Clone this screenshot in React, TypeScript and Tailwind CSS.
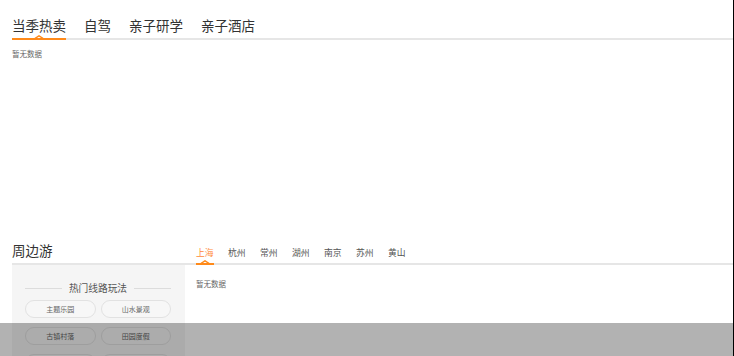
import React from 'react';

const font = { fontFamily: '"Noto Sans CJK SC", "Noto Sans", sans-serif' };

const topTabs = ['当季热卖', '自驾', '亲子研学', '亲子酒店'];
const cities = ['上海', '杭州', '常州', '湖州', '南京', '苏州', '黄山'];
const pills = ['主题乐园', '山水景观', '古镇村落', '田园度假', '', ''];

const Notch = () => (
  <div className="absolute left-0 right-0 -bottom-[2px] h-[2px] bg-[#ff8a1a]">
    <svg
      width="10"
      height="4"
      viewBox="0 0 10 4"
      className="absolute left-1/2 -translate-x-1/2 -top-[3px]"
    >
      <path d="M0 4 L5 0.8 L10 4" fill="none" stroke="#ff8a1a" strokeWidth="1.4" />
    </svg>
  </div>
);

export default function App() {
  return (
    <div className="relative w-[733px] bg-white pl-3 text-[#333]" style={font}>
      {/* 当季热卖 section */}
      <div className="h-[238px] pt-[13px]">
        <div className="flex gap-[18px] border-b-2 border-[#e6e6e6]">
          {topTabs.map((t, i) => (
            <div key={t} className="relative h-[25px] text-[13.5px] leading-[25px] text-[#333]">
              {t}
              {i === 0 && <Notch />}
            </div>
          ))}
        </div>
        <div className="mt-[9px] text-[7.5px] leading-[10px] text-[#666]">暂无数据</div>
      </div>

      {/* 周边游 section */}
      <div className="flex items-end border-b-2 border-[#e6e6e6]">
        <div className="w-[173px] h-[25px] text-[13.5px] leading-[25px] text-[#333]">周边游</div>
        <div className="ml-[11px] flex gap-[14px]">
          {cities.map((c, i) => (
            <div
              key={c}
              className={`relative h-[20px] w-[18px] text-[8.8px] leading-[20px] ${
                i === 0 ? 'text-[#ff8a3a]' : 'text-[#555]'
              }`}
            >
              {c}
              {i === 0 && <Notch />}
            </div>
          ))}
        </div>
      </div>

      <div className="flex">
        <div className="w-[173px] bg-[#f5f5f5] pl-[13px] pr-[14px] pt-[16px] pb-[14px]">
          <div className="flex items-center gap-[7px]">
            <div className="h-px flex-1 bg-[#dcdcdc]" />
            <div className="text-[9.7px] leading-[14px] text-[#555]">热门线路玩法</div>
            <div className="h-px flex-1 bg-[#dcdcdc]" />
          </div>
          <div className="mt-[5px] grid grid-cols-2 gap-x-[5px] gap-y-[9px]">
            {pills.map((p, i) => (
              <div
                key={i}
                className="flex h-[18px] items-center justify-center rounded-full border border-[#e2e2e2] bg-[#f7f7f7] text-[7px] text-[#666]"
              >
                {p}
              </div>
            ))}
          </div>
        </div>
        <div className="ml-[11px] pt-[14px] text-[7.5px] leading-[10px] text-[#666]">暂无数据</div>
      </div>

      {/* bottom mask and right edge */}
      <div className="fixed inset-x-0 bottom-0 h-[33px] bg-black/30" />
      <div className="fixed right-0 top-0 h-full w-px bg-black" />
    </div>
  );
}
